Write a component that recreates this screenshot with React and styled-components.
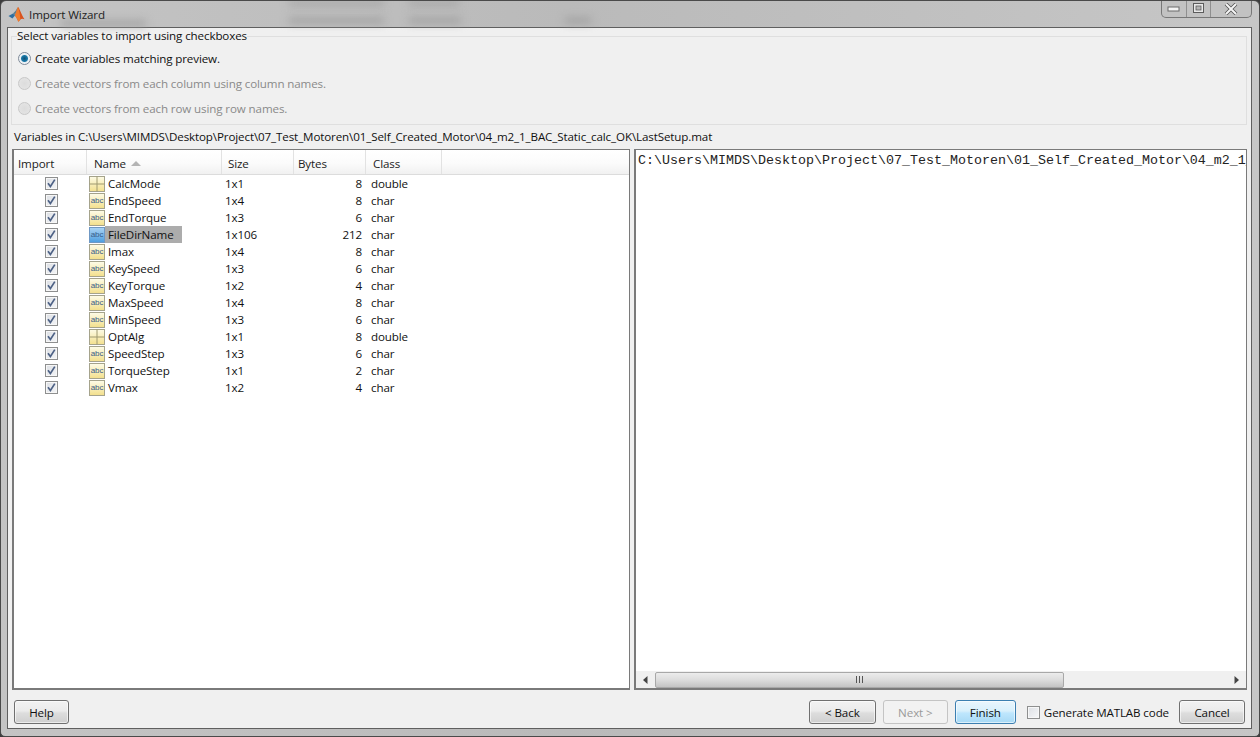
import styled, { createGlobalStyle } from 'styled-components';

const PATH = 'C:\\Users\\MIMDS\\Desktop\\Project\\07_Test_Motoren\\01_Self_Created_Motor\\04_m2_1_BAC_Static_calc_OK';

const variables = [
  { name: 'CalcMode', size: '1x1', bytes: 8, cls: 'double' },
  { name: 'EndSpeed', size: '1x4', bytes: 8, cls: 'char' },
  { name: 'EndTorque', size: '1x3', bytes: 6, cls: 'char' },
  { name: 'FileDirName', size: '1x106', bytes: 212, cls: 'char', selected: true },
  { name: 'Imax', size: '1x4', bytes: 8, cls: 'char' },
  { name: 'KeySpeed', size: '1x3', bytes: 6, cls: 'char' },
  { name: 'KeyTorque', size: '1x2', bytes: 4, cls: 'char' },
  { name: 'MaxSpeed', size: '1x4', bytes: 8, cls: 'char' },
  { name: 'MinSpeed', size: '1x3', bytes: 6, cls: 'char' },
  { name: 'OptAlg', size: '1x1', bytes: 8, cls: 'double' },
  { name: 'SpeedStep', size: '1x3', bytes: 6, cls: 'char' },
  { name: 'TorqueStep', size: '1x1', bytes: 2, cls: 'char' },
  { name: 'Vmax', size: '1x2', bytes: 4, cls: 'char' },
];

// what shows blurred through the glass title bar
const smudges = [
  { left: 288, top: 0, width: 95, height: 4 },
  { left: 408, top: 0, width: 50, height: 4 },
  { left: 60, top: 20, width: 85, height: 5 },
  { left: 288, top: 17, width: 95, height: 5 },
  { left: 408, top: 17, width: 52, height: 5 },
  { left: 564, top: 17, width: 26, height: 5 },
];

export default function App() {
  return (
    <>
      <GlobalStyle />
      <Window>
        <TitleBar>
          {smudges.map((s, idx) => (
            <Smudge key={idx} style={s} />
          ))}
          <MatlabLogo />
          <WindowTitle>Import Wizard</WindowTitle>
          <CaptionButtons>
            <CaptionButton $width={24}>
              <svg width="14" height="6" viewBox="0 0 14 6">
                <rect x="1" y="1" width="11" height="4" fill="#f4f4f4" stroke="#6a6a6a" />
              </svg>
            </CaptionButton>
            <CaptionButton $width={24}>
              <svg width="12" height="11" viewBox="0 0 12 11">
                <rect x="0.5" y="0.5" width="10" height="9" fill="#e8e8e8" stroke="#5c5c5c" />
                <rect x="3" y="3" width="5" height="4" fill="#b5b5b5" stroke="#5c5c5c" strokeWidth="0.8" />
              </svg>
            </CaptionButton>
            <CaptionButton $width={41}>
              <svg width="14" height="12" viewBox="0 0 14 12">
                <path d="M2 1 L12 11 M12 1 L2 11" stroke="#555" strokeWidth="3.6" />
                <path d="M2 1 L12 11 M12 1 L2 11" stroke="#f5f5f5" strokeWidth="2" />
              </svg>
            </CaptionButton>
          </CaptionButtons>
        </TitleBar>

        <Content>
          <GroupBox>
            <GroupLegend>Select variables to import using checkboxes</GroupLegend>
            <RadioRow>
              <Radio $checked />
              <RadioLabel>Create variables matching preview.</RadioLabel>
            </RadioRow>
            <RadioRow>
              <Radio />
              <RadioLabel $disabled>Create vectors from each column using column names.</RadioLabel>
            </RadioRow>
            <RadioRow>
              <Radio />
              <RadioLabel $disabled>Create vectors from each row using row names.</RadioLabel>
            </RadioRow>
          </GroupBox>

          <PathLabel>Variables in {PATH}\LastSetup.mat</PathLabel>

          <Panels>
            <TablePanel>
              <HeaderRow>
                <HeaderCell>Import</HeaderCell>
                <HeaderCell $pad={7}>
                  Name
                  <SortArrow />
                </HeaderCell>
                <HeaderCell $pad={6}>Size</HeaderCell>
                <HeaderCell>Bytes</HeaderCell>
                <HeaderCell $pad={7}>Class</HeaderCell>
                <HeaderCell />
              </HeaderRow>
              {variables.map((v) => (
                <Row key={v.name}>
                  <CheckCell>
                    <CheckBox>
                      <CheckMark />
                    </CheckBox>
                  </CheckCell>
                  <NameCell>
                    {v.cls === 'double' ? <MatrixIcon /> : <AbcIcon $selected={v.selected}>abc</AbcIcon>}
                    <VarName $selected={v.selected}>{v.name}</VarName>
                  </NameCell>
                  <SizeCell>{v.size}</SizeCell>
                  <BytesCell>{v.bytes}</BytesCell>
                  <ClassCell>{v.cls}</ClassCell>
                </Row>
              ))}
            </TablePanel>

            <PreviewPanel>
              <PreviewText>{PATH}</PreviewText>
              <ScrollBar>
                <ScrollArrow>
                  <svg width="5" height="8" viewBox="0 0 5 8">
                    <path d="M4.5 0 L0 4 L4.5 8 Z" fill="#444" />
                  </svg>
                </ScrollArrow>
                <ScrollThumb>
                  <svg width="7" height="7" viewBox="0 0 7 7">
                    <path d="M0.5 0 V7 M3.5 0 V7 M6.5 0 V7" stroke="#555" />
                  </svg>
                </ScrollThumb>
                <ScrollTrack />
                <ScrollArrow>
                  <svg width="5" height="8" viewBox="0 0 5 8">
                    <path d="M0.5 0 L5 4 L0.5 8 Z" fill="#444" />
                  </svg>
                </ScrollArrow>
              </ScrollBar>
            </PreviewPanel>
          </Panels>

          <Footer>
            <Button $width={55}>Help</Button>
            <FooterRight>
              <Button $width={67}>&lt; Back</Button>
              <Button $width={65} $disabled>
                Next &gt;
              </Button>
              <Button $width={61} $primary>
                Finish
              </Button>
              <GenerateOption>
                <PlainBox />
                Generate MATLAB code
              </GenerateOption>
              <Button $width={66}>Cancel</Button>
            </FooterRight>
          </Footer>
        </Content>
      </Window>
    </>
  );
}

function MatlabLogo() {
  return (
    <LogoSvg width="17" height="17" viewBox="0 0 17 17">
      <path d="M0.5 10 L5 7.6 L7 9.4 L4.4 12.4 Z" fill="#2f6f9f" />
      <path d="M5 7.6 L7.6 4.8 L10 1 L7 9.4 Z" fill="#5f7f8f" />
      <path d="M10 1 C11.5 2 13 8 16.5 13.2 C14.8 12.6 13.6 12.2 12.4 13.6 C11.6 14.6 11 15.4 10.4 15.8 C9.4 13.4 8.4 11.2 7 9.4 Z" fill="#d9531e" />
      <path d="M10 1 C11 3 12 8 12.4 13.6 C11.6 14.6 11 15.4 10.4 15.8 C9.4 13.4 8.4 11.2 7 9.4 Z" fill="#ef7d2c" />
    </LogoSvg>
  );
}

function CheckMark() {
  return (
    <svg width="11" height="11" viewBox="0 0 11 11">
      <path d="M2 5.2 L4.4 8.4 L8.8 1.6" fill="none" stroke="#4d6185" strokeWidth="1.7" />
    </svg>
  );
}

function MatrixIcon() {
  return (
    <svg width="16" height="16" viewBox="0 0 16 16">
      <defs>
        <linearGradient id="matrixFill" x1="0" y1="0" x2="0" y2="1">
          <stop offset="0" stopColor="#fdfbe6" />
          <stop offset="1" stopColor="#f3e08e" />
        </linearGradient>
      </defs>
      <rect x="0.5" y="0.5" width="15" height="15" fill="url(#matrixFill)" stroke="#a5a38c" />
      <path d="M8 0.5 V15.5 M0.5 8 H15.5" stroke="#a09a70" />
    </svg>
  );
}

const GlobalStyle = createGlobalStyle`
  html, body {
    margin: 0;
    padding: 0;
    width: 1260px;
    height: 737px;
    overflow: hidden;
    background: #3c3c3c;
  }
  * {
    box-sizing: border-box;
  }
`;

const Window = styled.div`
  width: 1260px;
  height: 737px;
  display: flex;
  flex-direction: column;
  overflow: hidden;
  border: 1px solid #4a4a4a;
  border-radius: 6px 6px 5px 5px;
  background: linear-gradient(90deg, #c4c4c4 0%, #bababa 45%, #c6c6c6 100%);
  font-family: 'Open Sans', 'Noto Sans', sans-serif;
  font-size: 11.6px;
  color: #111;
`;

const TitleBar = styled.div`
  position: relative;
  height: 26px;
  flex: none;
  display: flex;
  align-items: center;
  padding: 0 0 0 7px;
`;

const Smudge = styled.span`
  position: absolute;
  background: #9c9c9c;
  filter: blur(4px);
`;

const LogoSvg = styled.svg`
  position: relative;
  flex: none;
`;

const WindowTitle = styled.span`
  position: relative;
  margin-left: 4px;
  color: #222;
  letter-spacing: -0.1px;
`;

const CaptionButtons = styled.div`
  position: absolute;
  top: -1px;
  right: 7px;
  display: flex;
  height: 18px;
  border: 1px solid #777;
  border-top: none;
  border-radius: 0 0 5px 5px;
  background: #c2c2c2;
`;

const CaptionButton = styled.div`
  width: ${(p) => p.$width}px;
  display: flex;
  align-items: center;
  justify-content: center;
  & + & {
    border-left: 1px solid #8f8f8f;
  }
`;

const Content = styled.div`
  flex: 1;
  min-height: 0;
  display: flex;
  flex-direction: column;
  margin: 0 7px 7px 6px;
  padding: 0 4px;
  border: 1px solid #5f5f5f;
  background: #f0f0f0;
`;

const GroupBox = styled.fieldset`
  height: 96px;
  flex: none;
  margin: 1px 0 0 -1px;
  padding: 5px 0 0 6px;
  border: 1px solid #dfdfdf;
  display: flex;
  flex-direction: column;
  gap: 5px;
`;

const GroupLegend = styled.legend`
  padding: 0;
  margin-left: -1px;
  line-height: 14px;
  letter-spacing: -0.12px;
`;

const RadioRow = styled.div`
  height: 20px;
  display: flex;
  align-items: center;
  gap: 4px;
`;

const Radio = styled.span`
  width: 13px;
  height: 13px;
  flex: none;
  border-radius: 50%;
  border: 1px solid ${(p) => (p.$checked ? '#7f8a99' : '#c8c8c8')};
  background: ${(p) =>
    p.$checked
      ? 'radial-gradient(circle, #0e4f78 0, #1a7aa8 3px, #e9eef3 4px, #fff 100%)'
      : 'radial-gradient(circle, #dcdcdc 0, #e6e6e6 100%)'};
`;

const RadioLabel = styled.span`
  letter-spacing: -0.12px;
  color: ${(p) => (p.$disabled ? '#8a8a8a' : '#111')};
`;

const PathLabel = styled.div`
  height: 24px;
  flex: none;
  display: flex;
  align-items: center;
  padding: 0 0 2px 2px;
  letter-spacing: -0.12px;
`;

const Panels = styled.div`
  flex: 1;
  min-height: 0;
  display: flex;
  gap: 4px;
`;

const TablePanel = styled.div`
  width: 618px;
  flex: none;
  border: 1px solid #7a7a7a;
  border-width: 1px 1px 2px 2px;
  background: #fff;
`;

const tableColumns = '73px 135px 72px 72px 76px 1fr';

const HeaderRow = styled.div`
  height: 25px;
  display: grid;
  grid-template-columns: ${tableColumns};
  background: linear-gradient(180deg, #fff 0%, #fbfbfb 55%, #f1f1f1 100%);
  border-bottom: 1px solid #dcdcdc;
`;

const HeaderCell = styled.div`
  display: flex;
  align-items: center;
  gap: 5px;
  padding-left: ${(p) => p.$pad ?? 4}px;
  padding-top: 2px;
  border-right: 1px solid #e2e2e2;
  letter-spacing: -0.12px;
  color: #222;
  &:last-child {
    border-right: none;
  }
`;

const SortArrow = styled.span`
  width: 0;
  height: 0;
  border-left: 5px solid transparent;
  border-right: 5px solid transparent;
  border-bottom: 5px solid #b4b4b4;
`;

const Row = styled.div`
  height: 17px;
  display: grid;
  grid-template-columns: ${tableColumns};
  align-items: center;
  letter-spacing: -0.12px;
`;

const CheckCell = styled.div`
  display: flex;
  justify-content: center;
  padding-left: 2px;
`;

const CheckBox = styled.span`
  width: 13px;
  height: 13px;
  display: flex;
  align-items: center;
  justify-content: center;
  border: 1px solid #8e8f8f;
  background: linear-gradient(135deg, #dcdfe4 0%, #f4f5f7 100%);
  box-shadow: inset 0 0 0 1px #f7f7f7;
`;

const NameCell = styled.div`
  display: flex;
  align-items: center;
  padding-left: 2px;
`;

const AbcIcon = styled.span`
  width: 16px;
  height: 16px;
  flex: none;
  display: flex;
  align-items: center;
  justify-content: center;
  border: 1px solid ${(p) => (p.$selected ? '#6f98c4' : '#a5a38c')};
  background: ${(p) =>
    p.$selected
      ? 'linear-gradient(180deg, #a9d2f3 0%, #4f9fe0 100%)'
      : 'linear-gradient(180deg, #fdfbe6 0%, #f3e08e 100%)'};
  font-family: 'Liberation Sans', sans-serif;
  font-size: 8px;
  letter-spacing: -0.1px;
  color: #3a5f8a;
`;

const VarName = styled.span`
  height: 17px;
  line-height: 17px;
  margin-left: ${(p) => (p.$selected ? '0' : '3px')};
  padding: ${(p) => (p.$selected ? '0 8px 0 3px' : '0')};
  background: ${(p) => (p.$selected ? '#acacac' : 'transparent')};
`;

const SizeCell = styled.div`
  padding-left: 3px;
`;

const BytesCell = styled.div`
  text-align: right;
  padding-right: 4px;
`;

const ClassCell = styled.div`
  padding-left: 5px;
`;

const PreviewPanel = styled.div`
  flex: 1;
  min-width: 0;
  display: flex;
  flex-direction: column;
  border: 1px solid #7a7a7a;
  border-width: 1px 1px 2px 2px;
  background: #fff;
`;

const PreviewText = styled.div`
  flex: 1;
  min-height: 0;
  overflow: hidden;
  padding: 3px 0 0 2px;
  white-space: nowrap;
  font-family: 'Liberation Mono', monospace;
  font-size: 13.33px;
  line-height: 15px;
  color: #222;
`;

const ScrollBar = styled.div`
  height: 17px;
  flex: none;
  display: flex;
  align-items: center;
  background: #f0f0f0;
`;

const ScrollArrow = styled.div`
  width: 19px;
  height: 17px;
  flex: none;
  display: flex;
  align-items: center;
  justify-content: center;
`;

const ScrollThumb = styled.div`
  width: 409px;
  height: 16px;
  flex: none;
  display: flex;
  align-items: center;
  justify-content: center;
  border: 1px solid #a8a8a8;
  border-radius: 2px;
  background: linear-gradient(180deg, #ececec 0%, #dcdcdc 50%, #c4c4c4 100%);
`;

const ScrollTrack = styled.div`
  flex: 1;
`;

const Footer = styled.div`
  height: 38px;
  flex: none;
  display: flex;
  align-items: flex-start;
  justify-content: space-between;
  padding: 10px 2px 0 2px;
`;

const FooterRight = styled.div`
  display: flex;
  align-items: center;
  gap: 7px;
`;

const Button = styled.div`
  width: ${(p) => p.$width}px;
  height: 24px;
  display: flex;
  align-items: center;
  justify-content: center;
  border: 1px solid ${(p) => (p.$primary ? '#3c7fb1' : p.$disabled ? '#c4c4c4' : '#707070')};
  border-radius: 3px;
  background: ${(p) =>
    p.$primary
      ? 'linear-gradient(180deg, #eaf6fd 0%, #d9f0fc 45%, #bee6fd 55%, #a7d9f5 100%)'
      : p.$disabled
        ? '#f2f2f2'
        : 'linear-gradient(180deg, #f2f2f2 0%, #ebebeb 45%, #dddddd 55%, #cfcfcf 100%)'};
  box-shadow: ${(p) => (p.$disabled ? 'none' : 'inset 0 0 0 1px rgba(255, 255, 255, 0.6)')};
  color: ${(p) => (p.$disabled ? '#9a9a9a' : '#111')};
  letter-spacing: -0.1px;
`;

const GenerateOption = styled.div`
  display: flex;
  align-items: center;
  gap: 4px;
  margin: 0 3px 0 4px;
  letter-spacing: -0.12px;
`;

const PlainBox = styled.span`
  width: 13px;
  height: 13px;
  border: 1px solid #8e8f8f;
  background: linear-gradient(135deg, #dcdfe4 0%, #f7f8f9 100%);
  box-shadow: inset 0 0 0 1px #f7f7f7;
`;
